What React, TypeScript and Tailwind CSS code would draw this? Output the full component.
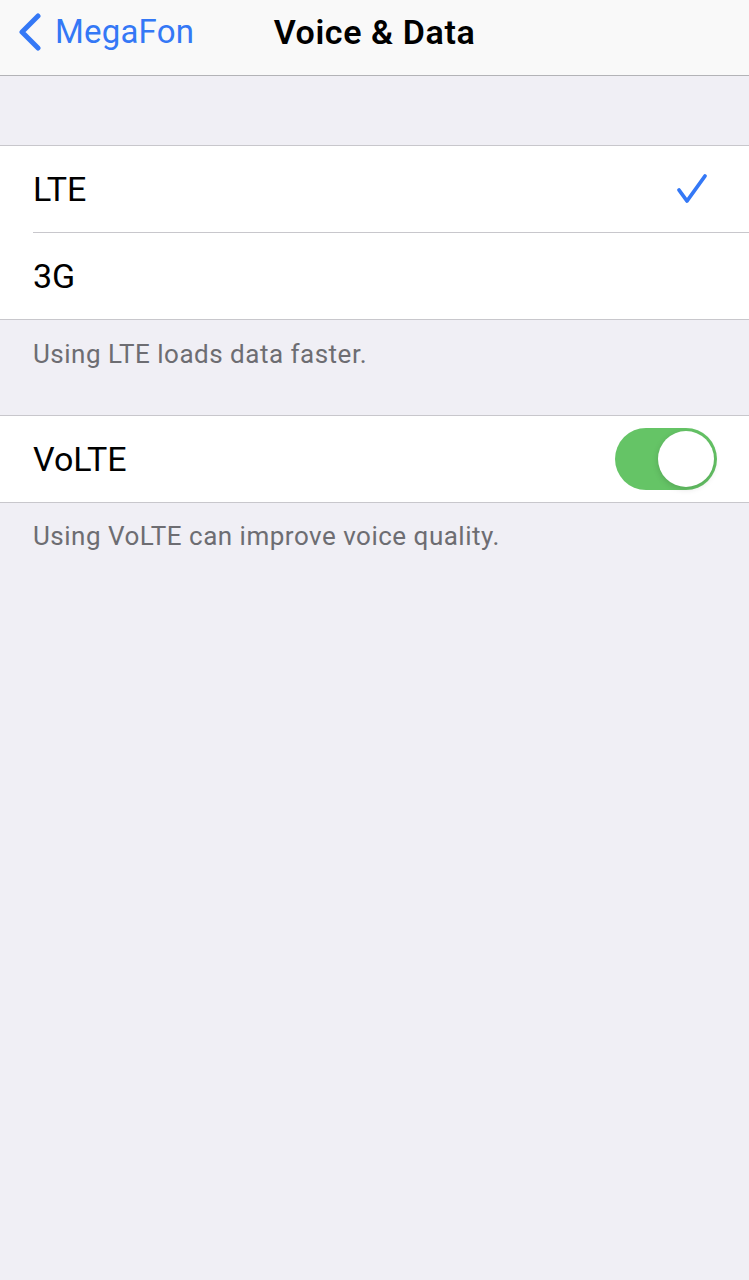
import React from "react";

function Chevron() {
  return (
    <svg width="24" height="38" viewBox="0 0 24 38" className="shrink-0">
      <path d="M21 3 L5 19 L21 35" fill="none" stroke="#3478f6" strokeWidth="5" strokeLinecap="round" strokeLinejoin="round" />
    </svg>
  );
}

function Check() {
  return (
    <svg width="34" height="32" viewBox="0 0 34 32">
      <path d="M4 17 L12 28 L30 3" fill="none" stroke="#3478f6" strokeWidth="3.8" strokeLinecap="round" strokeLinejoin="round" />
    </svg>
  );
}

function Toggle() {
  return (
    <div className="w-[102px] h-[62px] rounded-full bg-[#65c466] flex items-center justify-end px-[3px]">
      <div className="w-[56px] h-[56px] rounded-full bg-white shadow-[0_2px_6px_rgba(0,0,0,0.15)]" />
    </div>
  );
}

export default function App() {
  const font = { fontFamily: "Roboto, 'Liberation Sans', sans-serif" };
  return (
    <div className="w-[749px] h-[1280px] bg-[#f0eff5] flex flex-col" style={font}>
      <div className="h-[76px] bg-[#f9f9f9] border-b border-[#b3b3b7] relative">
        <div className="h-[63px] flex items-center pl-[17px] gap-[14px] text-[#3478f6] text-[33px] leading-none">
          <Chevron />
          <span className="tracking-[0.2px]">MegaFon</span>
        </div>
        <div className="absolute inset-x-0 top-0 h-[63px] flex items-center justify-center pointer-events-none">
          <span className="text-[34px] font-semibold text-black leading-none tracking-[0.6px]">Voice &amp; Data</span>
        </div>
      </div>

      <div className="h-[69px]" />

      <div className="bg-white border-y border-[#c8c7cc]">
        <div className="h-[86px] flex items-center justify-between pl-[33px] pr-[40px]">
          <span className="text-[34px] text-black">LTE</span>
          <Check />
        </div>
        <div className="ml-[33px] h-px bg-[#c8c7cc]" />
        <div className="h-[86px] flex items-center pl-[33px]">
          <span className="text-[34px] text-black">3G</span>
        </div>
      </div>

      <div className="h-[95px] pl-[33px] pt-[15px] text-[26px] tracking-[0.5px] text-[#6d6d72]">Using LTE loads data faster.</div>

      <div className="bg-white border-y border-[#c8c7cc]">
        <div className="h-[86px] flex items-center justify-between pl-[33px] pr-[32px]">
          <span className="text-[34px] text-black">VoLTE</span>
          <Toggle />
        </div>
      </div>

      <div className="pl-[33px] pt-[14px] text-[26px] tracking-[0.5px] text-[#6d6d72]">Using VoLTE can improve voice quality.</div>
    </div>
  );
}
